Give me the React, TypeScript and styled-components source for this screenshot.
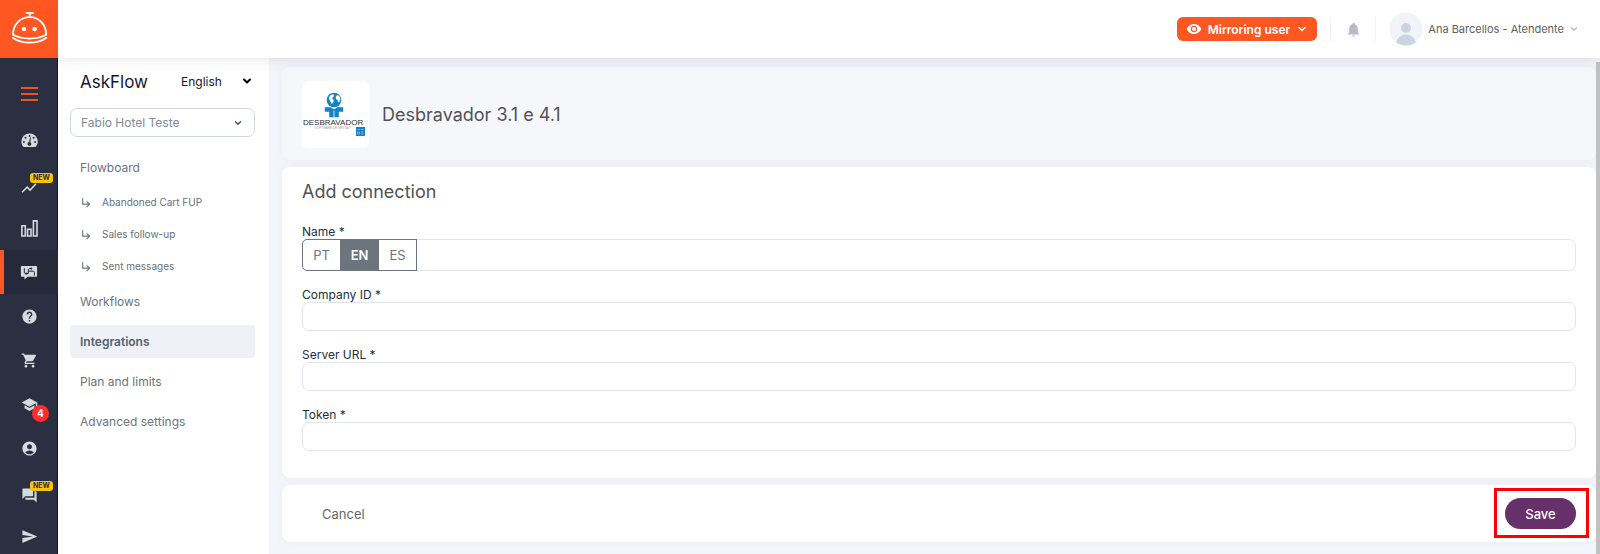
import React from "react";
import styled, { createGlobalStyle } from "styled-components";
import {
  MdAccountCircle,
  MdForum,
  MdHelp,
  MdNotifications,
  MdSchool,
  MdSend,
  MdShoppingCart,
  MdShowChart,
  MdSubdirectoryArrowRight,
  MdVisibility,
} from "react-icons/md";
import { ChevronDown } from "lucide-react";

const GlobalStyle = createGlobalStyle`
  * { box-sizing: border-box; }
  body {
    margin: 0;
    background: #f4f5fa;
    color: #54565a;
    font-family: Inter, "Liberation Sans", sans-serif;
    font-size: 12px;
  }
  button, input, select { font: inherit; color: inherit; }
  a { color: inherit; text-decoration: none; }
`;

const Shell = styled.div`
  display: grid;
  grid-template-columns: 58px 1fr;
  height: 100vh;
  overflow: hidden;
`;

/* ---------- icon rail ---------- */

const Rail = styled.nav`
  display: flex;
  flex-direction: column;
  overflow: hidden;
  background: #2b2f42;
  box-shadow: inset -1px 0 0 #15182c;
  color: #d3dddd;
`;

const Brand = styled.a`
  display: block;
  flex: none;
  height: 58px;
  background: #ff5722;
`;

const MenuButton = styled.button`
  display: flex;
  flex: none;
  flex-direction: column;
  align-items: center;
  justify-content: center;
  gap: 4px;
  height: 48px;
  margin: 12px 0 0;
  padding: 0;
  border: 0;
  background: none;
`;

const MenuLine = styled.span`
  width: 17px;
  height: 2px;
  background: #f4511e;
`;

const RailItem = styled.a<{ $active?: boolean; $low?: boolean }>`
  position: relative;
  display: flex;
  flex: none;
  align-items: center;
  justify-content: center;
  height: 44px;
  padding-top: ${(p) => (p.$low ? 7 : 0)}px;
  background: ${(p) => (p.$active ? "#252939" : "transparent")};
  box-shadow: ${(p) => (p.$active ? "inset 4px 0 0 #ff5722" : "none")};
`;

const NewTag = styled.span`
  position: absolute;
  top: 11px;
  left: 30px;
  height: 10px;
  padding: 0 3px;
  border-radius: 3px;
  background: #ffc107;
  color: #2b2f42;
  font-size: 7px;
  font-weight: 700;
  line-height: 10px;
`;

const CountTag = styled.span`
  position: absolute;
  top: 23px;
  left: 32px;
  width: 17px;
  height: 17px;
  border-radius: 50%;
  background: #ff2d2d;
  color: #fff;
  font-size: 10px;
  font-weight: 700;
  line-height: 17px;
  text-align: center;
`;

/* ---------- top bar ---------- */

const Page = styled.div`
  display: grid;
  grid-template-rows: 58px 1fr;
  min-width: 0;
  min-height: 0;
`;

const TopBar = styled.header`
  position: relative;
  z-index: 1;
  display: flex;
  align-items: center;
  justify-content: flex-end;
  padding-right: 21px;
  background: #fff;
  box-shadow: 0 1px 12px rgba(60, 64, 80, 0.14);
`;

const MirrorButton = styled.button`
  display: flex;
  align-items: center;
  gap: 6px;
  height: 24px;
  padding: 0 9px;
  border: 0;
  border-radius: 6px;
  background: #ff5722;
  color: #fff;
  font-weight: 600;
`;

const BellButton = styled.button`
  display: flex;
  align-items: center;
  justify-content: center;
  width: 46px;
  height: 24px;
  margin: 0 13px;
  padding: 0;
  border: 0;
  border-left: 1px solid #f0f1f6;
  border-right: 1px solid #f0f1f6;
  background: none;
  color: #b9b9cc;
`;

const UserButton = styled.button`
  display: flex;
  align-items: center;
  gap: 5px;
  padding: 0;
  border: 0;
  background: none;
  font-size: 11px;
  color: #606060;
`;

/* ---------- side menu ---------- */

const Body = styled.div`
  display: grid;
  grid-template-columns: 211px 1fr 4px;
  min-height: 0;
`;

const SideMenu = styled.aside`
  padding: 12px 14px 0 12px;
  background: #fff;
`;

const SideHead = styled.div`
  display: flex;
  align-items: center;
  justify-content: space-between;
  height: 23px;
  margin-bottom: 15px;
  padding-left: 10px;
`;

const AppName = styled.h1`
  margin: 0;
  color: #16182a;
  font-size: 17px;
  font-weight: 400;
  line-height: 22px;
`;

const SelectWrap = styled.div<{ $boxed?: boolean }>`
  position: relative;
  display: flex;
  width: ${(p) => (p.$boxed ? "100%" : "74px")};

  svg {
    position: absolute;
    top: 50%;
    right: ${(p) => (p.$boxed ? 12 : 2)}px;
    margin-top: ${(p) => (p.$boxed ? -5 : -7)}px;
    pointer-events: none;
    color: ${(p) => (p.$boxed ? "#3c4a5a" : "#000")};
  }
`;

const Select = styled.select<{ $boxed?: boolean }>`
  appearance: none;
  width: 100%;
  height: ${(p) => (p.$boxed ? 29 : 22)}px;
  padding: ${(p) => (p.$boxed ? "0 26px 0 10px" : "0")};
  border: ${(p) => (p.$boxed ? "1px solid #d0d6e0" : "0")};
  border-radius: ${(p) => (p.$boxed ? 7 : 0)}px;
  background: transparent;
  color: ${(p) => (p.$boxed ? "#838b95" : "#16182a")};
`;

const MenuList = styled.ul`
  display: flex;
  flex-direction: column;
  gap: 7px;
  margin: 14px 0 0;
  padding: 0;
  list-style: none;
`;

const MenuLink = styled.a<{ $active?: boolean }>`
  display: block;
  padding: 0 10px;
  border-radius: 4px;
  background: ${(p) => (p.$active ? "#eef1f7" : "transparent")};
  color: ${(p) => (p.$active ? "#54616e" : "#6a7480")};
  font-weight: ${(p) => (p.$active ? 600 : 400)};
  line-height: 33px;
`;

const SubList = styled.ul`
  margin: 2px 0 -4px;
  padding: 0;
  list-style: none;
`;

const SubLink = styled.a`
  display: flex;
  align-items: center;
  gap: 9px;
  height: 32px;
  padding-left: 10px;
  color: #66707c;
  font-size: 10px;
`;

/* ---------- content ---------- */

const Content = styled.main`
  display: flex;
  flex-direction: column;
  gap: 7px;
  min-width: 0;
  padding: 9px 0 0 13px;
`;

const ScrollThumb = styled.div`
  margin-top: 4px;
  background: #c1c1c3;
`;

const TitleCard = styled.section`
  display: flex;
  align-items: center;
  gap: 13px;
  height: 93px;
  padding: 2px 20px 0;
  border-radius: 8px;
  background: #f6f7fb;
  box-shadow: 0 0 8px rgba(90, 97, 130, 0.06);
`;

const Heading = styled.h2`
  margin: 0;
  color: #505256;
  font-size: 18px;
  font-weight: 400;
  line-height: 24px;
`;

const Card = styled.div`
  padding: 13px 20px 27px;
  border-radius: 8px;
  background: #fff;
  box-shadow: 0 0 8px rgba(90, 97, 130, 0.06);
`;

const Fields = styled.form`
  display: flex;
  flex-direction: column;
  gap: 16px;
  margin-top: 20px;
`;

const Label = styled.label`
  display: block;
  color: #22303f;
  line-height: 15px;
`;

const TextInput = styled.input`
  display: block;
  width: 100%;
  height: 29px;
  padding: 0 10px;
  border: 1px solid #e2e5e9;
  border-radius: 7px;
  background: #fff;
`;

const LangRow = styled.div`
  display: flex;
  height: 32px;

  ${TextInput} {
    flex: 1;
    height: 100%;
    border-left: 0;
    border-radius: 0 7px 7px 0;
  }
`;

const LangButton = styled.button<{ $active?: boolean }>`
  width: 39px;
  margin-right: -1px;
  padding: 0;
  border: 1px solid #6c757d;
  background: ${(p) => (p.$active ? "#6c757d" : "#fff")};
  color: ${(p) => (p.$active ? "#fff" : "#6c757d")};
  font-size: 13px;
  font-weight: ${(p) => (p.$active ? 600 : 400)};

  &:first-child { border-radius: 5px 0 0 5px; }
  &:last-of-type { margin-right: 0; }
`;

const Actions = styled.div`
  display: flex;
  align-items: center;
  justify-content: space-between;
  height: 57px;
  padding: 0 20px;
  border-radius: 8px;
  background: #fff;
  box-shadow: 0 0 8px rgba(90, 97, 130, 0.06);
`;

const CancelButton = styled.button`
  padding: 0 20px;
  border: 0;
  background: none;
  color: #66686c;
  font-size: 13px;
`;

const SaveFrame = styled.div`
  position: relative;

  &::after {
    content: "";
    position: absolute;
    inset: -10px -13px -9px -11px;
    border: 3px solid #fb0007;
    pointer-events: none;
  }
`;

const SaveButton = styled.button`
  display: block;
  width: 71px;
  height: 31px;
  padding: 0;
  border: 0;
  border-radius: 16px;
  background: #66306a;
  color: #fff;
  font-size: 13px;
  font-weight: 500;
`;

/* ---------- drawings ---------- */

const BellBot = () => (
  <svg width="58" height="58" viewBox="0 0 58 58" fill="none" stroke="#fff" strokeWidth="1.8" strokeLinecap="round" aria-hidden="true">
    <path d="M26.500 13h6.500M29.700 13v4" />
    <path d="M13 34.800C12.800 24.400 20.400 17.200 29.600 17.200s16.800 7.200 16.600 17.600c-9.600 5-23.600 5-33.200 0z" strokeLinejoin="round" />
    <path d="M12.800 37.800c8.800 6.500 24.800 6.500 33.600 0" />
    <circle cx="24" cy="29" r="2.300" fill="#fff" stroke="none" />
    <circle cx="34.600" cy="29" r="2.300" fill="#fff" stroke="none" />
  </svg>
);

const Gauge = () => (
  <svg width="17" height="15" viewBox="0 0 17 15" aria-hidden="true">
    <path d="M8.500.5A8.100 8.100 0 0 0 .4 8.600c0 1.900.6 3.600 1.600 5 .2.300.5.500.9.500h11.200c.4 0 .7-.2.9-.5a8.100 8.100 0 0 0-6.500-13.100z" fill="currentColor" />
    <g fill="#2b2f42">
      <circle cx="8.500" cy="3" r="1" />
      <circle cx="4.500" cy="4.700" r="1" />
      <circle cx="12.700" cy="4.700" r="1" />
      <circle cx="2.900" cy="8.900" r="1" />
      <circle cx="14.100" cy="8.900" r="1" />
      <path d="M9.100 4.400l.9.200-.7 4.700a1.900 1.900 0 1 1-1.200-.2z" />
    </g>
  </svg>
);

const Bars = () => (
  <svg width="17" height="17" viewBox="0 0 17 17" fill="none" stroke="currentColor" strokeWidth="1.600" aria-hidden="true">
    <path d="M.9 5.700h3.400v10.300H.9zM6.600 9.200h3.400v6.800H6.600zM12.400.9h3.600v15.100h-3.600z" />
  </svg>
);

const FlowChat = () => (
  <svg width="18" height="15" viewBox="0 0 18 15" aria-hidden="true">
    <path d="M1.800 1h14.400c.5 0 .9.400.9.900v8.900c0 .5-.4.900-.9.900H7.600L4.400 14.500v-2.800H1.800a.9.900 0 0 1-.9-.9V1.900c0-.5.4-.9.900-.9z" fill="currentColor" />
    <path d="M4.300 3.200v4.200c0 .8.500 1.200 1.300 1.200h2.700V4.800c0-.8.500-1.200 1.200-1.200h2.600M8.300 6.200h5c.7 0 1.100.4 1.100 1.100v3.200" fill="none" stroke="#252939" />
    <circle cx="6.300" cy="8.600" r="1.100" fill="#252939" />
    <circle cx="11.200" cy="3.600" r="1.100" fill="#252939" />
  </svg>
);

const Avatar = () => (
  <svg width="34" height="34" viewBox="0 0 34 34" aria-hidden="true">
    <clipPath id="avatarClip"><circle cx="17" cy="17" r="16.500" /></clipPath>
    <circle cx="17" cy="17" r="16.500" fill="#f0f4f8" />
    <g fill="#cbd5e2" clipPath="url(#avatarClip)">
      <circle cx="17" cy="16" r="5" />
      <path d="M7 34c0-7.500 4.200-11.500 10-11.500S27 26.500 27 34z" />
    </g>
  </svg>
);

const PartnerLogo = () => (
  <svg width="67" height="67" viewBox="0 0 67 67" role="img" aria-label="Desbravador">
    <rect width="67" height="67" rx="6" fill="#fff" />
    <circle cx="32" cy="19" r="7.300" fill="#1583c6" />
    <path d="M27.500 15.500c1.500-2 3.300-2.400 4.500-1.600.4 1.300-.6 2-1.700 2.800-.2 1.300.9 1.500 1.500 2.400.3 1.600-.9 2.700-1.800 3.800-1.600-1-1.300-2.500-2.300-3.800-.9-1-1.200-2.200-.2-3.600z" fill="#fff" />
    <path d="M34.800 14.300c1.700-.2 3 1 3.400 2.800.2 1.700-.2 3.300-1.500 4.400-1.100-.5-.5-1.700-1.200-2.600-1.200-.5-2.200-1.300-1.700-2.700z" fill="#fff" />
    <path d="M22.800 26.200h6.400c.6 1.200 1.600 1.700 2.800 1.700s2.200-.5 2.800-1.700h6.400v4.500h-4.400v5.500h-9.600v-5.500h-4.400z" fill="#1583c6" />
    <path d="M32 29.500v6.700" stroke="#fff" strokeWidth=".8" />
    <text x="1" y="44" fontSize="8" fill="#2c2c30" fontFamily="Liberation Sans, sans-serif">DESBRAVADOR</text>
    <text x="13" y="48" fontSize="3" fill="#9a9aa0" fontFamily="Liberation Sans, sans-serif">SOFTWARE DE GESTÃO</text>
    <rect x="54" y="46" width="9" height="9" fill="#1583c6" />
    <path d="M55.500 48.500h2.200M59 48.500h2.500M55.500 51h2v2h-2zM59 51h2.500M59 53h2.500" stroke="#a8d4ee" strokeWidth=".6" fill="none" />
  </svg>
);

const subItems = ["Abandoned Cart FUP", "Sales follow-up", "Sent messages"];
const languages = ["PT", "EN", "ES"];
const plainFields = [
  { id: "company", label: "Company ID *" },
  { id: "server", label: "Server URL *" },
  { id: "token", label: "Token *" },
];

export default function App() {
  const [lang, setLang] = React.useState("EN");

  return (
    <>
      <GlobalStyle />
      <Shell>
        <Rail aria-label="Main">
          <Brand href="#" aria-label="Home"><BellBot /></Brand>
          <MenuButton type="button" aria-label="Toggle menu">
            <MenuLine /><MenuLine /><MenuLine />
          </MenuButton>
          <RailItem href="#" aria-label="Dashboard"><Gauge /></RailItem>
          <RailItem href="#" aria-label="Trends" $low><MdShowChart size={18} /><NewTag>NEW</NewTag></RailItem>
          <RailItem href="#" aria-label="Reports"><Bars /></RailItem>
          <RailItem href="#" aria-label="AskFlow" $active><FlowChat /></RailItem>
          <RailItem href="#" aria-label="Help"><MdHelp size={17} /></RailItem>
          <RailItem href="#" aria-label="Store"><MdShoppingCart size={17} /></RailItem>
          <RailItem href="#" aria-label="Academy"><MdSchool size={17} /><CountTag>4</CountTag></RailItem>
          <RailItem href="#" aria-label="Account"><MdAccountCircle size={17} /></RailItem>
          <RailItem href="#" aria-label="Chat" $low><MdForum size={17} /><NewTag>NEW</NewTag></RailItem>
          <RailItem href="#" aria-label="Send"><MdSend size={17} /></RailItem>
        </Rail>

        <Page>
          <TopBar>
            <MirrorButton type="button">
              <MdVisibility size={16} />
              Mirroring user
              <ChevronDown size={12} strokeWidth={3} />
            </MirrorButton>
            <BellButton type="button" aria-label="Notifications"><MdNotifications size={17} /></BellButton>
            <UserButton type="button">
              <Avatar />
              Ana Barcellos - Atendente
              <ChevronDown size={10} color="#b4b6cc" strokeWidth={3} />
            </UserButton>
          </TopBar>

          <Body>
            <SideMenu>
              <SideHead>
                <AppName>AskFlow</AppName>
                <SelectWrap>
                  <Select aria-label="Language" defaultValue="English"><option>English</option></Select>
                  <ChevronDown size={12} strokeWidth={4} />
                </SelectWrap>
              </SideHead>
              <SelectWrap $boxed>
                <Select $boxed aria-label="Hotel" defaultValue="Fabio Hotel Teste"><option>Fabio Hotel Teste</option></Select>
                <ChevronDown size={10} strokeWidth={3} />
              </SelectWrap>
              <MenuList>
                <li>
                  <MenuLink href="#">Flowboard</MenuLink>
                  <SubList>
                    {subItems.map((item) => (
                      <li key={item}>
                        <SubLink href="#"><MdSubdirectoryArrowRight size={13} />{item}</SubLink>
                      </li>
                    ))}
                  </SubList>
                </li>
                <li><MenuLink href="#">Workflows</MenuLink></li>
                <li><MenuLink href="#" $active>Integrations</MenuLink></li>
                <li><MenuLink href="#">Plan and limits</MenuLink></li>
                <li><MenuLink href="#">Advanced settings</MenuLink></li>
              </MenuList>
            </SideMenu>

            <Content>
              <TitleCard>
                <PartnerLogo />
                <Heading>Desbravador 3.1 e 4.1</Heading>
              </TitleCard>
              <Card>
                <Heading>Add connection</Heading>
                <Fields>
                  <div>
                    <Label htmlFor="name">Name *</Label>
                    <LangRow>
                      {languages.map((code) => (
                        <LangButton key={code} type="button" $active={code === lang} onClick={() => setLang(code)}>
                          {code}
                        </LangButton>
                      ))}
                      <TextInput id="name" />
                    </LangRow>
                  </div>
                  {plainFields.map((f) => (
                    <div key={f.id}>
                      <Label htmlFor={f.id}>{f.label}</Label>
                      <TextInput id={f.id} />
                    </div>
                  ))}
                </Fields>
              </Card>
              <Actions>
                <CancelButton type="button">Cancel</CancelButton>
                <SaveFrame><SaveButton type="button">Save</SaveButton></SaveFrame>
              </Actions>
            </Content>
            <ScrollThumb />
          </Body>
        </Page>
      </Shell>
    </>
  );
}
